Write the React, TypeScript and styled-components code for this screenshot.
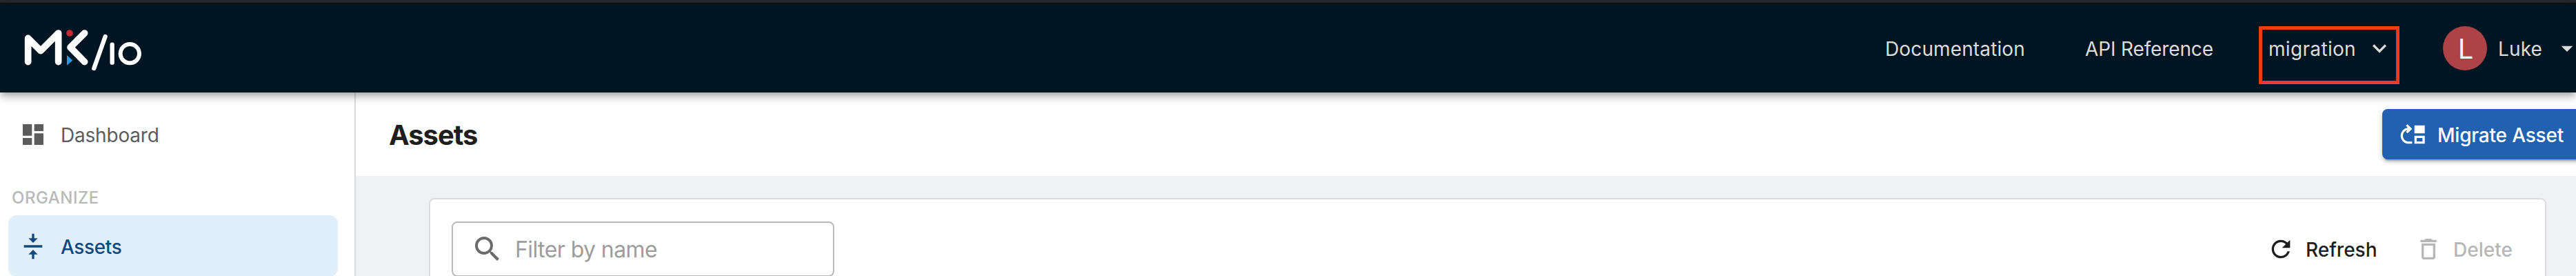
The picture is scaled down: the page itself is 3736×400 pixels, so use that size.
import React from 'react';
import styled, { createGlobalStyle } from 'styled-components';
import {
  MdArrowDropDown,
  MdDashboard,
  MdDeleteOutline,
  MdKeyboardArrowDown,
  MdMoveUp,
  MdRefresh,
  MdSearch,
  MdVerticalAlignCenter,
} from 'react-icons/md';

const GlobalStyle = createGlobalStyle`
  *, *::before, *::after { box-sizing: border-box; }
  body { margin: 0; overflow: hidden; background: #fff; }
  button, input { font: inherit; letter-spacing: inherit; }
  svg { display: block; flex: none; }
`;

const Page = styled.div`
  display: flex;
  flex-direction: column;
  width: 100%;
  height: 400px;
  overflow: hidden;
  font-family: Inter, "Liberation Sans", sans-serif;
  font-size: 28px;
  color: #1e1e1e;
`;

const WindowEdge = styled.div`
  flex: none;
  height: 6px;
  background: #28272d;
  border-bottom: 2px solid #101113;
`;

const AppBar = styled.header`
  position: relative;
  z-index: 2;
  flex: none;
  display: flex;
  align-items: center;
  justify-content: space-between;
  height: 128px;
  padding-left: 20px;
  background: #001522;
  box-shadow: 0 4px 8px -2px rgba(0, 0, 0, 0.2), 0 8px 10px rgba(0, 0, 0, 0.14),
    0 2px 20px rgba(0, 0, 0, 0.12);
`;

const LogoMark = styled.svg`
  width: 200px;
  height: 80px;
`;

const Nav = styled.nav`
  display: flex;
  align-items: center;
  color: #dcdcdc;
  white-space: nowrap;
`;

const NavLink = styled.a<{ $width: number; $tracking: number }>`
  width: ${(p) => p.$width}px;
  padding-top: 2px;
  line-height: 40px;
  letter-spacing: ${(p) => p.$tracking}px;
`;

const TenantPicker = styled.div`
  position: relative;
  display: flex;
  align-items: center;
  width: 254px;
`;

const TenantName = styled.span`
  width: 142px;
  padding: 2px 0 0 1px;
  line-height: 40px;
  letter-spacing: 0.33px;
`;

const Highlight = styled.div`
  position: absolute;
  left: -13px;
  top: -11px;
  width: 204px;
  height: 84px;
  border: 5px solid #ee3a1e;
`;

const Avatar = styled.div`
  display: flex;
  align-items: center;
  justify-content: center;
  width: 64px;
  height: 64px;
  margin-right: 16px;
  padding: 2px 0 0 2px;
  border-radius: 50%;
  background: #ad4247;
  color: #f3f3f8;
  font-size: 40px;
  line-height: 60px;
`;

const UserName = styled.span`
  width: 80px;
  padding-top: 2px;
  line-height: 40px;
  letter-spacing: 0.15px;
`;

const UserArrow = styled.span`
  margin-right: -7px;
`;

const Body = styled.div`
  flex: 1;
  min-height: 0;
  display: flex;
`;

const Sidebar = styled.aside`
  flex: none;
  width: 516px;
  padding: 16px 24px 0 12px;
  border-right: 2px solid #dcdcdc;
`;

const SideItem = styled.a<{ $active?: boolean }>`
  display: flex;
  align-items: center;
  gap: 20px;
  height: 89px;
  padding-left: 16px;
  border-radius: 12px;
  background: ${(p) => (p.$active ? '#e1effa' : 'transparent')};
  color: ${(p) => (p.$active ? '#12487e' : '#5c5c5c')};
  font-weight: ${(p) => (p.$active ? 500 : 400)};
  letter-spacing: ${(p) => (p.$active ? -0.4 : -0.2)}px;
`;

const SideLabel = styled.span`
  padding-top: 3px;
  line-height: 40px;
`;

const SideHeading = styled.div`
  height: 73px;
  padding: 34px 0 0 5px;
  color: #b9b9b9;
  font-size: 24px;
  font-weight: 500;
  line-height: 28px;
  letter-spacing: 0.5px;
`;

const Main = styled.main`
  flex: 1;
  min-width: 0;
  background: #f0f1f5;
`;

const PageHeader = styled.div`
  display: flex;
  align-items: center;
  justify-content: space-between;
  height: 121px;
  padding-left: 48px;
  background: #fff;
`;

const Title = styled.h1`
  margin: 0;
  padding-top: 3px;
  font-size: 40px;
  font-weight: 700;
  line-height: 48px;
  letter-spacing: -1.1px;
`;

const MigrateButton = styled.button`
  display: flex;
  align-items: center;
  gap: 15px;
  width: 301px;
  height: 73px;
  margin-right: -20px;
  padding: 0 0 0 25px;
  border: 0;
  border-radius: 8px;
  background: #2161af;
  color: #fff;
  font-weight: 500;
  line-height: 40px;
  letter-spacing: -0.2px;
  white-space: nowrap;
  box-shadow: 0 6px 2px -4px rgba(0, 0, 0, 0.2), 0 4px 4px rgba(0, 0, 0, 0.14),
    0 2px 10px rgba(0, 0, 0, 0.12);
`;

const ButtonLabel = styled.span`
  padding-top: 3px;
`;

const Card = styled.section`
  display: flex;
  align-items: flex-start;
  justify-content: space-between;
  height: 200px;
  margin: 32px 43px 0 106px;
  padding: 32px 48px 0 31px;
  border: 2px solid #dcdcdc;
  border-radius: 8px;
  background: #fff;
`;

const SearchField = styled.label`
  display: flex;
  align-items: center;
  gap: 16px;
  width: 555px;
  height: 80px;
  padding-left: 26px;
  border: 2px solid #bababa;
  border-radius: 8px;
  color: #6b6b6b;
`;

const SearchInput = styled.input`
  flex: 1;
  min-width: 0;
  height: 48px;
  padding: 0;
  border: 0;
  outline: 0;
  background: none;
  font-size: 32px;
  letter-spacing: -0.58px;
  &::placeholder { color: #9d9d9d; opacity: 1; }
`;

const Actions = styled.div`
  display: flex;
  align-items: center;
  height: 80px;
`;

const ActionButton = styled.button<{ $width: number }>`
  display: flex;
  align-items: center;
  gap: 16px;
  width: ${(p) => p.$width}px;
  padding: 0;
  border: 0;
  background: none;
  color: #1e1e1e;
  font-weight: 500;
  line-height: 40px;
  &:disabled { color: #b7b7b7; }
`;

const ActionLabel = styled.span`
  padding-top: 1px;
`;

function Logo() {
  return (
    <LogoMark viewBox="0 0 600 240" fill="none" stroke="#fff" strokeLinecap="round" strokeLinejoin="round" role="img" aria-label="MK/IO">
      <circle cx="243" cy="54" r="14.5" fill="#c42b35" stroke="none" />
      <path d="M231 150l25 22.500-25 22z" fill="#2f96e0" stroke="none" />
      <path d="M62 179V76l55 55 77-77v125M308 54l-62 62 62 63" strokeWidth="29" />
      <path d="M398 69L349 207" strokeWidth="19" />
      <path d="M428 104v78" strokeWidth="19" />
      <ellipse cx="505" cy="143" rx="41" ry="41" strokeWidth="18" />
    </LogoMark>
  );
}

export default function App() {
  return (
    <Page>
      <GlobalStyle />
      <WindowEdge />
      <AppBar>
        <Logo />
        <Nav>
          <NavLink $width={290} $tracking={0.13}>Documentation</NavLink>
          <NavLink $width={265} $tracking={-0.14}>API Reference</NavLink>
          <TenantPicker>
            <TenantName>migration</TenantName>
            <MdKeyboardArrowDown size={40} />
            <Highlight />
          </TenantPicker>
          <Avatar>L</Avatar>
          <UserName>Luke</UserName>
          <UserArrow>
            <MdArrowDropDown size={40} />
          </UserArrow>
        </Nav>
      </AppBar>
      <Body>
        <Sidebar>
          <SideItem>
            <MdDashboard size={40} />
            <SideLabel>Dashboard</SideLabel>
          </SideItem>
          <SideHeading>ORGANIZE</SideHeading>
          <SideItem $active>
            <MdVerticalAlignCenter size={40} />
            <SideLabel>Assets</SideLabel>
          </SideItem>
        </Sidebar>
        <Main>
          <PageHeader>
            <Title>Assets</Title>
            <MigrateButton>
              <MdMoveUp size={40} />
              <ButtonLabel>Migrate Asset</ButtonLabel>
            </MigrateButton>
          </PageHeader>
          <Card>
            <SearchField>
              <MdSearch size={48} />
              <SearchInput placeholder="Filter by name" />
            </SearchField>
            <Actions>
              <ActionButton $width={214}>
                <MdRefresh size={40} />
                <ActionLabel>Refresh</ActionLabel>
              </ActionButton>
              <ActionButton $width={141} disabled>
                <MdDeleteOutline size={40} />
                <ActionLabel>Delete</ActionLabel>
              </ActionButton>
            </Actions>
          </Card>
        </Main>
      </Body>
    </Page>
  );
}
